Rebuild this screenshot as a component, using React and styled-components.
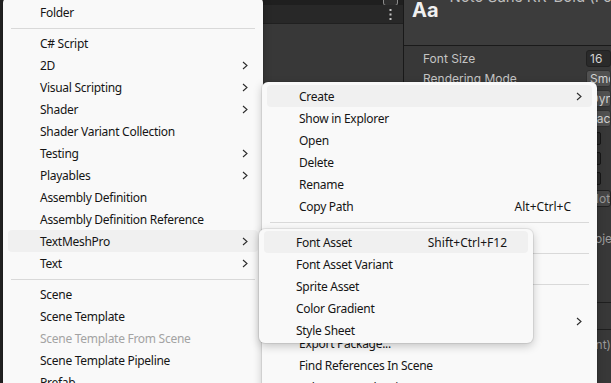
import React from 'react';
import styled, { createGlobalStyle } from 'styled-components';

const GlobalStyle = createGlobalStyle`
    html, body {
        margin: 0;
        padding: 0;
        background: #383838;
    }
    body {
        width: 611px;
        height: 383px;
        overflow: hidden;
    }
`;

const Screen = styled.div`
    position: relative;
    width: 611px;
    height: 383px;
    overflow: hidden;
    display: flex;
    background: #383838;
    font-family: Inter, "Noto Sans", sans-serif;
`;

/* ---------- editor behind the menus ---------- */

const ProjectPanel = styled.div`
    width: 404px;
    flex-shrink: 0;
    display: flex;
    flex-direction: column;
    border-right: 1px solid #191919;
    border-left: 3px solid #242424;
    box-sizing: border-box;
`;

const TopStrip = styled.div`
    height: 5px;
    background: #1f1f1f;
    display: flex;
    justify-content: flex-end;
    padding-right: 5px;
    overflow: hidden;
`;

const LayoutButton = styled.div`
    width: 13px;
    height: 10px;
    margin-top: -6px;
    border: 1px solid #8c8c8c;
    border-radius: 3px;
    background: #2e2e2e;
`;

const Toolbar = styled.div`
    height: 18px;
    background: #282828;
    border-bottom: 1px solid #202020;
    display: flex;
    align-items: center;
    justify-content: flex-end;
    padding-right: 11px;
`;

const ProjectBody = styled.div`
    flex: 1;
    background: #383838;
`;

const Inspector = styled.div`
    flex: 1;
    display: flex;
    flex-direction: column;
    overflow: hidden;
    background: #383838;
`;

const InspectorHeader = styled.div`
    height: 45px;
    flex-shrink: 0;
    background: #3c3c3c;
    border-bottom: 1px solid #1a1a1a;
    display: flex;
    align-items: flex-start;
    padding-left: 8px;
    white-space: nowrap;
`;

const FontGlyph = styled.div`
    font-size: 20px;
    font-weight: 700;
    color: #f0f0f0;
    line-height: 20px;
`;

const AssetTitle = styled.div`
    font-size: 15px;
    color: #bdbdbd;
    line-height: 18px;
    margin-top: -12px;
    margin-left: 11px;
`;

const Props = styled.div`
    padding-top: 2px;
    display: flex;
    flex-direction: column;
`;

const PropRow = styled.div`
    height: 20px;
    display: flex;
    align-items: center;
    padding-left: 19px;
    white-space: nowrap;
`;

const PropLabel = styled.div`
    width: 163px;
    flex-shrink: 0;
    font-size: 12px;
    color: #c4c4c4;
`;

const Field = styled.div`
    flex: 1;
    height: 17px;
    box-sizing: border-box;
    padding-left: 3px;
    border-radius: 3px;
    font-size: 12px;
    line-height: 15px;
    color: ${p => (p.$muted ? '#9a9a9a' : '#d2d2d2')};
    background: ${p => (p.$kind === 'drop' ? '#515151' : p.$kind === 'text' ? '#464646' : '#2a2a2a')};
    border: 1px solid ${p => (p.$kind === 'drop' ? '#303030' : '#212121')};
    overflow: hidden;
`;

const Checkbox = styled.div`
    width: 13px;
    height: 13px;
    margin-left: 2px;
    box-sizing: border-box;
    border-radius: 2px;
    background: #2b2b2b;
    border: 1px solid #151515;
`;

const NoteRow = styled.div`
    margin-top: 20px;
    height: 20px;
    display: flex;
    align-items: center;
    padding-left: 19px;
    font-size: 12px;
    color: #9d9d9d;
    white-space: nowrap;
`;

const ApplyBar = styled.div`
    margin-top: 54px;
    height: 26px;
    flex-shrink: 0;
    border-top: 1px solid #1f1f1f;
    border-bottom: 1px solid #1f1f1f;
`;

const PreviewHeader = styled.div`
    height: 28px;
    display: flex;
    align-items: center;
    justify-content: flex-end;
    font-size: 12px;
    color: #9a9a9a;
    white-space: nowrap;
`;

/* ---------- context menus ---------- */

const Menu = styled.div`
    position: absolute;
    left: ${p => p.$left}px;
    top: ${p => p.$top}px;
    width: ${p => p.$width}px;
    height: ${p => (p.$height ? `${p.$height}px` : 'auto')};
    z-index: ${p => p.$layer};
    box-sizing: border-box;
    padding: ${p => p.$pad}px 0;
    background: #f9f9f9;
    border-radius: 6px;
    box-shadow: 0 0 0 1px rgba(0, 0, 0, 0.07), 0 3px 10px rgba(0, 0, 0, 0.22);
    font-family: "Noto Sans", "Open Sans", sans-serif;
    font-size: 12px;
    color: #151515;
`;

const Item = styled.div`
    display: flex;
    align-items: center;
    height: 22px;
    margin: 0 5px;
    padding-left: 32px;
    border-radius: 4px;
    white-space: nowrap;
    background: ${p => (p.$active ? '#f0f0f0' : 'transparent')};
    color: ${p => (p.$disabled ? '#a3a3a3' : '#151515')};
`;

const ItemLabel = styled.span`
    flex: 1;
    letter-spacing: -0.28px;
`;

const Shortcut = styled.span`
    padding-right: 21px;
`;

const Arrow = styled.span`
    display: flex;
    width: 6px;
    margin-right: 10px;
`;

const Separator = styled.div`
    height: 1px;
    margin: 5px 8px 3px;
    background: #d9d9d9;
`;

const Chevron = () => (
    <svg width='6' height='9' viewBox='0 0 6 9'>
        <polyline points='1,1 5,4.5 1,8' fill='none' stroke='#2c2c2c' strokeWidth='1.1' />
    </svg>
);

const Kebab = () => (
    <svg width='3' height='11' viewBox='0 0 3 11'>
        <rect x='0.5' y='0' width='2' height='2' fill='#c4c4c4' />
        <rect x='0.5' y='4.5' width='2' height='2' fill='#c4c4c4' />
        <rect x='0.5' y='9' width='2' height='2' fill='#c4c4c4' />
    </svg>
);

const MenuEntry = ({ label, shortcut, sub, active, disabled }) => (
    <Item $active={active} $disabled={disabled}>
        <ItemLabel>{label}</ItemLabel>
        {shortcut && <Shortcut>{shortcut}</Shortcut>}
        {sub && <Arrow><Chevron /></Arrow>}
    </Item>
);

const createItems = [
    ['Folder'],
    '-',
    ['C# Script'],
    ['2D', true],
    ['Visual Scripting', true],
    ['Shader', true],
    ['Shader Variant Collection'],
    ['Testing', true],
    ['Playables', true],
    ['Assembly Definition'],
    ['Assembly Definition Reference'],
    ['TextMeshPro', true, true],
    ['Text', true],
    '-',
    ['Scene'],
    ['Scene Template'],
    ['Scene Template From Scene', false, false, true],
    ['Scene Template Pipeline'],
    ['Prefab']
];

const contextItems = [
    { label: 'Create', sub: true, active: true },
    { label: 'Show in Explorer' },
    { label: 'Open' },
    { label: 'Delete' },
    { label: 'Rename' },
    { label: 'Copy Path', shortcut: 'Alt+Ctrl+C' },
    '-',
    { label: 'Open Scene Additive' },
    '-',
    { label: 'View in Package Manager' },
    '-',
    { label: 'Import New Asset...' },
    { label: 'Import Package', sub: true },
    { label: 'Export Package...' },
    { label: 'Find References In Scene' },
    { label: 'Select Dependencies' }
];

const tmpItems = [
    { label: 'Font Asset', shortcut: 'Shift+Ctrl+F12', active: true },
    { label: 'Font Asset Variant' },
    { label: 'Sprite Asset' },
    { label: 'Color Gradient' },
    { label: 'Style Sheet' }
];

export default function App () {
    return (
        <Screen>
            <GlobalStyle />

            <ProjectPanel>
                <TopStrip><LayoutButton /></TopStrip>
                <Toolbar><Kebab /></Toolbar>
                <ProjectBody />
            </ProjectPanel>

            <Inspector>
                <InspectorHeader>
                    <FontGlyph>Aa</FontGlyph>
                    <AssetTitle>Noto Sans KR-Bold (Font) Import Settings</AssetTitle>
                </InspectorHeader>
                <Props>
                    <PropRow><PropLabel>Font Size</PropLabel><Field>16</Field></PropRow>
                    <PropRow><PropLabel>Rendering Mode</PropLabel><Field $kind='drop'>Smooth</Field></PropRow>
                    <PropRow><PropLabel>Character</PropLabel><Field $kind='drop'>Dynamic</Field></PropRow>
                    <PropRow><PropLabel>Ascent Calculation Mode</PropLabel><Field $kind='drop'>Face Ascender</Field></PropRow>
                    <PropRow><PropLabel>Incl. Font Data</PropLabel><Checkbox /></PropRow>
                    <PropRow><PropLabel>Should Round Advance</PropLabel><Checkbox /></PropRow>
                    <PropRow><PropLabel>Use Legacy Bounds</PropLabel><Checkbox /></PropRow>
                    <PropRow><PropLabel>Font Names</PropLabel><Field $kind='text' $muted>Noto Sans KR</Field></PropRow>
                </Props>
                <NoteRow>References to other fonts in project</NoteRow>
                <ApplyBar />
                <PreviewHeader>Noto Sans KR-Bold (Font)</PreviewHeader>
            </Inspector>

            <Menu $left={3} $top={-3} $width={260} $height={400} $pad={4} $layer={1}>
                {createItems.map((it, i) => (it === '-'
                    ? <Separator key={i} />
                    : <MenuEntry key={i} label={it[0]} sub={it[1]} active={it[2]} disabled={it[3]} />
                ))}
            </Menu>

            <Menu $left={262} $top={82} $width={335} $height={320} $pad={3} $layer={2}>
                {contextItems.map((it, i) => (it === '-'
                    ? <Separator key={i} />
                    : <MenuEntry key={i} {...it} />
                ))}
            </Menu>

            <Menu $left={259} $top={229} $width={274} $pad={2} $layer={3}>
                {tmpItems.map((it, i) => <MenuEntry key={i} {...it} />)}
            </Menu>
        </Screen>
    );
}
